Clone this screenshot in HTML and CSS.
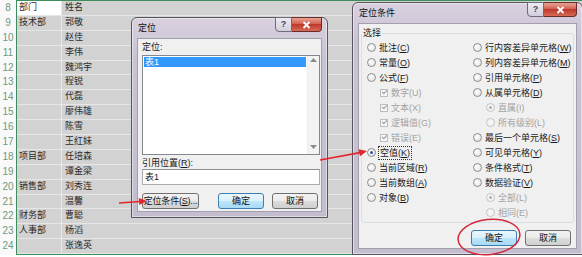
FILE: index.html
```html
<!DOCTYPE html>
<html lang="zh-CN">
<head>
    <meta charset="UTF-8">
    <meta name="viewport" content="width=device-width, initial-scale=1.0">
    <title>定位条件</title>
    <link rel="stylesheet" href="styles.css">
</head>
<body>
    <div class="sheet">
        <div class="heads">
            <div class="rh">8</div>
            <div class="rh">9</div>
            <div class="rh">10</div>
            <div class="rh">11</div>
            <div class="rh">12</div>
            <div class="rh">13</div>
            <div class="rh">14</div>
            <div class="rh">15</div>
            <div class="rh">16</div>
            <div class="rh">17</div>
            <div class="rh">18</div>
            <div class="rh">19</div>
            <div class="rh">20</div>
            <div class="rh">21</div>
            <div class="rh">22</div>
            <div class="rh">23</div>
            <div class="rh">24</div>
        </div>
        <div class="cells">
            <div class="row"><div class="ca active">部门</div><div class="cb">姓名</div></div>
            <div class="row"><div class="ca">技术部</div><div class="cb">郭敬</div></div>
            <div class="row"><div class="ca"></div><div class="cb">赵佳</div></div>
            <div class="row"><div class="ca"></div><div class="cb">李伟</div></div>
            <div class="row"><div class="ca"></div><div class="cb">魏鸿宇</div></div>
            <div class="row"><div class="ca"></div><div class="cb">程锐</div></div>
            <div class="row"><div class="ca"></div><div class="cb">代磊</div></div>
            <div class="row"><div class="ca"></div><div class="cb">廖伟雄</div></div>
            <div class="row"><div class="ca"></div><div class="cb">陈雪</div></div>
            <div class="row"><div class="ca"></div><div class="cb">王红妹</div></div>
            <div class="row"><div class="ca">项目部</div><div class="cb">任培森</div></div>
            <div class="row"><div class="ca"></div><div class="cb">谭金梁</div></div>
            <div class="row"><div class="ca">销售部</div><div class="cb">刘秀连</div></div>
            <div class="row"><div class="ca"></div><div class="cb">温馨</div></div>
            <div class="row"><div class="ca">财务部</div><div class="cb">曹聪</div></div>
            <div class="row"><div class="ca">人事部</div><div class="cb">杨滔</div></div>
            <div class="row"><div class="ca"></div><div class="cb">张逸英</div></div>
        </div>
    </div>

    <!-- 定位 dialog -->
    <div class="dlg dlg-goto">
        <div class="tbar">
            <span class="ttl">定位</span>
            <div class="tbtns">
                <span class="help">?</span>
                <span class="close">
                    <svg width="9" height="8" viewBox="0 0 9 8"><path d="M1.5 1l6 6M7.5 1l-6 6" stroke="#fff" stroke-width="1.8"/></svg>
                </span>
            </div>
        </div>
        <div class="client goto-body">
            <div class="lbl">定位:</div>
            <div class="listbox">
                <div class="items">
                    <div class="item sel">表1</div>
                </div>
                <div class="vscroll">
                    <svg width="7" height="4" viewBox="0 0 7 4"><polygon points="3.5,0 7,4 0,4" fill="#8a8a8a"/></svg>
                    <svg width="7" height="4" viewBox="0 0 7 4"><polygon points="0,0 7,0 3.5,4" fill="#8a8a8a"/></svg>
                </div>
            </div>
            <div class="lbl lbl-ref">引用位置(<u>R</u>):</div>
            <div class="field">表1</div>
            <div class="btnrow">
                <span class="btn btn-wide">定位条件(<u>S</u>)...</span>
                <span class="btn default">确定</span>
                <span class="btn">取消</span>
            </div>
        </div>
    </div>

    <!-- 定位条件 dialog -->
    <div class="dlg dlg-special">
        <div class="tbar">
            <span class="ttl">定位条件</span>
            <div class="tbtns">
                <span class="help">?</span>
                <span class="close">
                    <svg width="9" height="8" viewBox="0 0 9 8"><path d="M1.5 1l6 6M7.5 1l-6 6" stroke="#fff" stroke-width="1.8"/></svg>
                </span>
            </div>
        </div>
        <div class="client special-body">
            <fieldset class="group">
                <legend>选择</legend>
                <div class="opts">
                    <div class="opt"><span class="radio"></span><span>批注(<u>C</u>)</span></div>
                    <div class="opt"><span class="radio"></span><span>常量(<u>O</u>)</span></div>
                    <div class="opt"><span class="radio"></span><span>公式(<u>F</u>)</span></div>
                    <div class="opt sub off"><span class="check"></span><span>数字(U)</span></div>
                    <div class="opt sub off"><span class="check"></span><span>文本(X)</span></div>
                    <div class="opt sub off"><span class="check"></span><span>逻辑值(G)</span></div>
                    <div class="opt sub off"><span class="check"></span><span>错误(E)</span></div>
                    <div class="opt"><span class="radio on"></span><span class="focus">空值(<u>K</u>)</span></div>
                    <div class="opt"><span class="radio"></span><span>当前区域(<u>R</u>)</span></div>
                    <div class="opt"><span class="radio"></span><span>当前数组(<u>A</u>)</span></div>
                    <div class="opt"><span class="radio"></span><span>对象(<u>B</u>)</span></div>
                    <div class="opt"></div>

                    <div class="opt"><span class="radio"></span><span>行内容差异单元格(<u>W</u>)</span></div>
                    <div class="opt"><span class="radio"></span><span>列内容差异单元格(<u>M</u>)</span></div>
                    <div class="opt"><span class="radio"></span><span>引用单元格(<u>P</u>)</span></div>
                    <div class="opt"><span class="radio"></span><span>从属单元格(<u>D</u>)</span></div>
                    <div class="opt sub off"><span class="radio on"></span><span>直属(I)</span></div>
                    <div class="opt sub off"><span class="radio"></span><span>所有级别(L)</span></div>
                    <div class="opt"><span class="radio"></span><span>最后一个单元格(<u>S</u>)</span></div>
                    <div class="opt"><span class="radio"></span><span>可见单元格(<u>Y</u>)</span></div>
                    <div class="opt"><span class="radio"></span><span>条件格式(<u>T</u>)</span></div>
                    <div class="opt"><span class="radio"></span><span>数据验证(<u>V</u>)</span></div>
                    <div class="opt sub off"><span class="radio on"></span><span>全部(L)</span></div>
                    <div class="opt sub off"><span class="radio"></span><span>相同(E)</span></div>
                </div>
            </fieldset>
            <div class="btnrow btnrow-end">
                <span class="btn default">确定</span>
                <span class="btn">取消</span>
            </div>
        </div>
    </div>

    <!-- red annotations -->
    <svg class="marks" width="582" height="257" viewBox="0 0 582 257">
        <line x1="320" y1="160" x2="360" y2="152.6" stroke="#e3262e" stroke-width="1.6"/>
        <polygon points="367,151 360,156.2 358.4,149.2" fill="#e3262e"/>
        <line x1="119" y1="203" x2="140" y2="201.5" stroke="#e3262e" stroke-width="1.6"/>
        <polygon points="147,201 139.3,205.1 138.7,198" fill="#e3262e"/>
        <ellipse cx="489" cy="237" rx="31" ry="17.5" transform="rotate(-6 489 237)" fill="none" stroke="#d3283a" stroke-width="1.5"/>
    </svg>
</body>
</html>
```

FILE: styles.css
```css
* {
    box-sizing: border-box;
}

body {
    margin: 0;
    width: 582px;
    height: 257px;
    overflow: hidden;
    position: relative;
    background: #fff;
    font-family: "Liberation Sans", "Noto Sans CJK SC", sans-serif;
    font-size: 9px;
    color: #1a1a1a;
}

/* worksheet behind the dialogs */
.sheet {
    display: flex;
}

.heads {
    width: 16px;
    padding-top: 1px;
    background: #f9f9f9;
}

.rh {
    height: 14.9px;
    line-height: 14.9px;
    text-align: center;
    font-size: 10px;
    color: #6d9a7c;
}

.cells {
    flex: 1;
    border: 1px solid #3e8e5c;
    border-right: 0;
}

.row {
    display: flex;
    height: 14.9px;
    border-bottom: 1px solid #e6e6e6;
}

.ca, .cb {
    background: #d2d2d2;
    line-height: 13.9px;
    color: #2a2a2a;
}

.ca {
    width: 45px;
    padding-left: 2px;
    border-right: 1px solid #e8e8e8;
}

.cb {
    flex: 1;
    padding-left: 3px;
}

.ca.active {
    background: #fff;
}

/* windows 7 style dialogs */
.dlg {
    position: absolute;
    display: flex;
    flex-direction: column;
    padding: 0 5px 5px;
    border: 1px solid #57545e;
    border-radius: 6px 6px 0 0;
    background: linear-gradient(#d9d1df, #c9c2d4 40px, #c4bdcf);
    box-shadow: inset 0 0 0 1px rgba(255, 255, 255, 0.45);
}

.dlg-goto {
    left: 131px;
    top: 17px;
    width: 197px;
    height: 201px;
}

.dlg-special {
    left: 352px;
    top: 2px;
    width: 231px;
    height: 253px;
}

.tbar {
    height: 20px;
    display: flex;
}

.ttl {
    flex: 1;
    line-height: 20px;
    padding-left: 1px;
    color: #111;
}

.tbtns {
    display: flex;
    height: 15px;
    margin-top: -1px;
}

.help {
    width: 17px;
    border: 1px solid #6f6a78;
    border-radius: 0 0 0 4px;
    background: linear-gradient(#eeeaf2, #d3cddd);
    text-align: center;
    line-height: 13px;
    font-weight: bold;
    font-size: 9px;
    color: #4a4652;
}

.close {
    width: 30px;
    display: flex;
    align-items: center;
    justify-content: center;
    border: 1px solid #6b2b28;
    border-left: 0;
    border-radius: 0 0 4px 0;
    background: linear-gradient(#e8a394, #d0594a 50%, #c0392d 50%, #d46b55);
}

.dlg-special .close {
    width: 33px;
}

.client {
    flex: 1;
    background: #f0f0f0;
    border: 1px solid #a49faf;
}

/* 定位 */
.goto-body {
    display: flex;
    flex-direction: column;
    padding: 0 1px 0 4px;
}

.lbl {
    line-height: 11px;
    margin-top: 3px;
}

.listbox {
    margin-top: 2px;
    height: 100px;
    display: flex;
    border: 1px solid #828790;
    background: #fff;
}

.items {
    flex: 1;
    padding: 1px;
}

.item.sel {
    height: 10px;
    line-height: 10px;
    padding-left: 1px;
    background: #3399ff;
    color: #fff;
}

.vscroll {
    width: 12px;
    display: flex;
    flex-direction: column;
    justify-content: space-between;
    align-items: center;
    padding: 2px 0 5px;
    background: #f3f3f3;
    border-left: 1px solid #ececec;
}

.field {
    height: 16px;
    padding-left: 2px;
    line-height: 14px;
    border: 1px solid #abadb3;
    border-top-color: #8e8f8f;
    background: #fff;
}

.btnrow {
    display: flex;
    gap: 8px;
    margin: 8px 2px 0 0;
}

.btn {
    width: 46px;
    height: 16px;
    line-height: 14px;
    text-align: center;
    white-space: nowrap;
    border: 1px solid #707070;
    border-radius: 3px;
    background: linear-gradient(#f2f2f2, #ebebeb 50%, #dddddd 50%, #cfcfcf);
    color: #111;
}

.btn.default {
    border-color: #3c7fb1;
    background: linear-gradient(#eaf6fd, #d9f0fc 50%, #bee6fd 50%, #a7d9f5);
}

.btn-wide {
    width: 57px;
    margin-right: auto;
    letter-spacing: -0.2px;
}

/* 定位条件 */
.special-body {
    display: flex;
    flex-direction: column;
    padding: 0 2px;
}

.group {
    margin: 4px 0 0;
    padding: 2px 0 2px 0;
    min-width: 0;
    border: 1px solid #d5dfe5;
    border-radius: 3px;
}

.group legend {
    padding: 0 1px;
    line-height: 10px;
}

.opts {
    display: grid;
    grid-template-columns: 106px 1fr;
    grid-template-rows: repeat(12, 15px);
    grid-auto-flow: column;
    padding-left: 5px;
}

.opt {
    display: flex;
    align-items: center;
    gap: 3px;
    white-space: nowrap;
    line-height: 12px;
}

.opt.sub {
    padding-left: 13px;
}

.opt.off {
    color: #a3a3a3;
}

.radio {
    flex: none;
    position: relative;
    width: 9px;
    height: 9px;
    border: 1px solid #8d8d8d;
    border-radius: 50%;
    background: radial-gradient(circle at 40% 40%, #fff, #dcdcdc);
}

.radio.on::after {
    content: "";
    position: absolute;
    left: 2px;
    top: 2px;
    width: 3px;
    height: 3px;
    border-radius: 50%;
    background: #1f5c96;
}

.off .radio {
    border-color: #c3c3c3;
    background: #f4f4f4;
}

.off .radio.on::after {
    background: #b0b0b0;
}

.check {
    flex: none;
    position: relative;
    width: 8px;
    height: 8px;
    border: 1px solid #bdbdbd;
    background: #f7f7f7;
}

.check::after {
    content: "";
    position: absolute;
    left: 1px;
    top: 0;
    width: 4px;
    height: 2px;
    border-left: 1px solid #9a9a9a;
    border-bottom: 1px solid #9a9a9a;
    transform: rotate(-45deg);
}

.focus {
    outline: 1px dotted #333;
    padding: 0 1px;
}

.btnrow-end {
    justify-content: flex-end;
    margin: 7px 0 0;
    padding-right: 3px;
}

.marks {
    position: absolute;
    left: 0;
    top: 0;
    pointer-events: none;
}
```
